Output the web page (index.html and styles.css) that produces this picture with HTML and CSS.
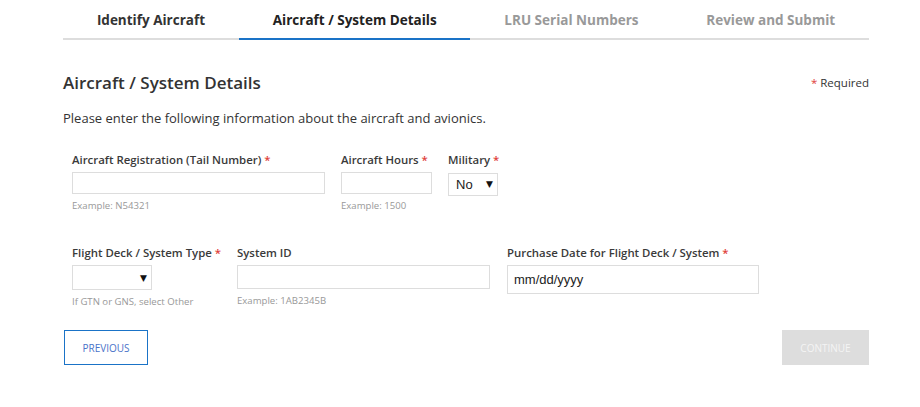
FILE: index.html
```html
<!DOCTYPE html>
<html lang="en">
<head>
  <meta charset="UTF-8">
  <meta name="viewport" content="width=device-width, initial-scale=1.0">
  <title>Aircraft / System Details</title>
  <link rel="stylesheet" href="styles.css">
</head>
<body>
  <div class="container">
    <!-- Wizard steps -->
    <ul class="steps">
      <li class="step done">Identify Aircraft</li>
      <li class="step active">Aircraft / System Details</li>
      <li class="step">LRU Serial Numbers</li>
      <li class="step">Review and Submit</li>
    </ul>

    <div class="page-head">
      <h2>Aircraft / System Details</h2>
      <span class="required-note"><span class="req">*</span> Required</span>
    </div>
    <p class="intro">Please enter the following information about the aircraft and avionics.</p>

    <form id="detailsForm" class="details-form">
      <div class="form-row">
        <div class="field field-tail">
          <label for="tail">Aircraft Registration (Tail Number) <span class="req">*</span></label>
          <input type="text" id="tail" name="tail">
          <small class="help">Example: N54321</small>
        </div>
        <div class="field field-hours">
          <label for="hours">Aircraft Hours <span class="req">*</span></label>
          <input type="text" id="hours" name="hours">
          <small class="help">Example: 1500</small>
        </div>
        <div class="field field-military">
          <label for="military">Military <span class="req">*</span></label>
          <div class="select-wrap select-small">
            <select id="military" name="military">
              <option>No</option>
              <option>Yes</option>
            </select>
            <span class="arrow">&#9660;</span>
          </div>
        </div>
      </div>

      <div class="form-row">
        <div class="field field-type">
          <label for="deckType">Flight Deck / System Type <span class="req">*</span></label>
          <div class="select-wrap select-type">
            <select id="deckType" name="deckType">
              <option></option>
              <option>Other</option>
            </select>
            <span class="arrow">&#9660;</span>
          </div>
          <small class="help">If GTN or GNS, select Other</small>
        </div>
        <div class="field field-sysid">
          <label for="systemId">System ID</label>
          <input type="text" id="systemId" name="systemId">
          <small class="help">Example: 1AB2345B</small>
        </div>
        <div class="field field-date">
          <label for="purchaseDate">Purchase Date for Flight Deck / System <span class="req">*</span></label>
          <input type="text" id="purchaseDate" name="purchaseDate" class="date-input" placeholder="mm/dd/yyyy">
        </div>
      </div>

      <div class="actions">
        <button type="button" class="btn btn-prev">PREVIOUS</button>
        <button type="submit" class="btn btn-continue" disabled>CONTINUE</button>
      </div>
    </form>
  </div>
</body>
</html>
```

FILE: styles.css
```css
/* General Styles */
body {
  font-family: 'Open Sans', 'Noto Sans', sans-serif;
  color: #333;
  background: #fff;
  margin: 0;
  padding: 0;
}

.container {
  width: 806px;
  margin: 0 0 0 63px;
}

/* Steps */
.steps {
  display: flex;
  list-style: none;
  margin: 0;
  padding: 0;
  border-bottom: 2px solid #ddd;
}

.step {
  flex: 1 1 auto;
  text-align: center;
  padding: 11px 0 9px;
  font-size: 13.5px;
  font-weight: 700;
  color: #999;
  margin-bottom: -2px;
  border-bottom: 2px solid transparent;
}

.step.done {
  color: #333;
}

.step.active {
  color: #222;
  border-bottom-color: #1a73c7;
}

/* Heading */
.page-head {
  display: flex;
  justify-content: space-between;
  align-items: center;
  margin-top: 31px;
}

h2 {
  margin: 0;
  font-size: 17px;
  font-weight: 600;
  color: #333;
}

.required-note {
  font-size: 11.5px;
  color: #333;
}

.req {
  color: #e0403a;
}

.intro {
  font-size: 13px;
  margin: 15px 0 25px;
  color: #333;
}

/* Form */
.details-form {
  padding-left: 9px;
}

.form-row {
  display: flex;
  gap: 16px;
  height: 93px;
}

.field {
  display: flex;
  flex-direction: column;
  align-items: flex-start;
}

label {
  font-size: 11.4px;
  font-weight: 600;
  color: #3a3a3a;
  margin-bottom: 5px;
  white-space: nowrap;
}

input[type="text"] {
  box-sizing: border-box;
  height: 22px;
  border: 1px solid #ddd;
  padding: 2px 5px;
  font-family: 'Liberation Sans', Arial, sans-serif;
  font-size: 13px;
  color: #222;
  outline: none;
}

.help {
  font-size: 9.6px;
  color: #999;
  margin-top: 5px;
}

.field-tail input { width: 253px; }
.field-hours input { width: 91px; }
.field-sysid input { width: 253px; height: 24px; }
.field-type { width: 149px; }
.field-date { margin-left: 1px; }
.field-date input.date-input {
  width: 252px;
  height: 29px;
  padding: 2px 6px;
}

.date-input::placeholder {
  color: #222;
  opacity: 1;
}

/* Selects */
.select-wrap {
  position: relative;
}

.select-wrap select {
  appearance: none;
  -webkit-appearance: none;
  box-sizing: border-box;
  border: 1px solid #ddd;
  background: #fff;
  font-family: 'Liberation Sans', Arial, sans-serif;
  font-size: 13px;
  color: #222;
  padding: 0 7px;
  outline: none;
}

.select-small select {
  width: 50px;
  height: 23px;
}

.select-type select {
  width: 80px;
  height: 25px;
}

.arrow {
  position: absolute;
  right: 5px;
  top: 50%;
  transform: translateY(-50%);
  font-family: 'DejaVu Sans', sans-serif;
  font-size: 9px;
  color: #111;
  pointer-events: none;
}

/* Buttons */
.actions {
  display: flex;
  justify-content: space-between;
  margin-left: -8px;
  margin-top: -8px;
}

.btn {
  height: 35px;
  font-family: 'Open Sans', sans-serif;
  font-size: 10px;
  cursor: pointer;
}

.btn-prev {
  width: 84px;
  background: #fff;
  border: 1px solid #1a73c7;
  color: #4a73c9;
}

.btn-continue {
  width: 87px;
  background: #ddd;
  border: none;
  color: #f4f4f4;
}
```
